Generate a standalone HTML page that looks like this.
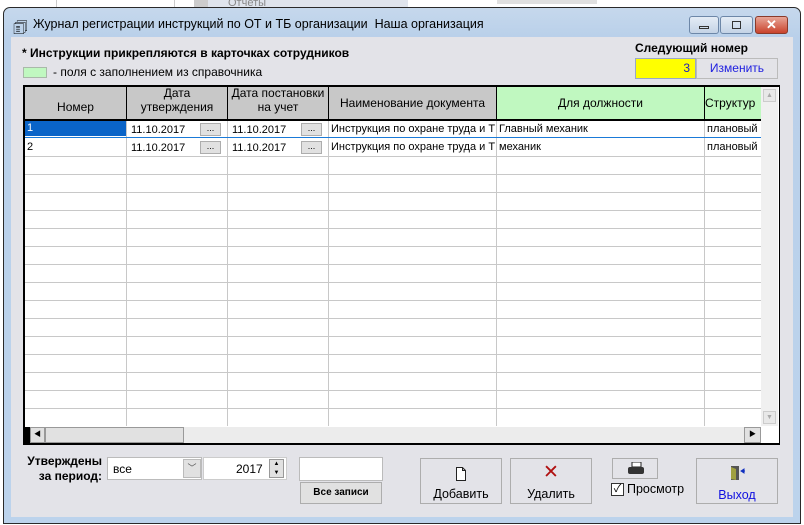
<!DOCTYPE html>
<html><head><meta charset="utf-8"><style>
*{margin:0;padding:0;box-sizing:border-box}
body{width:804px;height:525px;position:relative;overflow:hidden;background:#fff;font-family:"Liberation Sans","Noto Sans CJK SC",sans-serif;font-size:12px;color:#000}
.a{position:absolute}
.btn{position:absolute;background:#e1e1e1;border:1px solid #adadad;text-align:center}
.cell{position:absolute;white-space:nowrap;overflow:hidden;font-size:11px}
.dots{position:absolute;width:21px;height:13px;background:#e1e1e1;border:1px solid #adadad;font-size:9px;line-height:9px;text-align:center}
</style></head><body>
<!-- background app -->
<div class="a" style="left:0;top:0;width:804px;height:8px;background:#fff"></div>
<div class="a" style="left:56px;top:0;width:1px;height:8px;background:#ccc"></div>
<div class="a" style="left:174px;top:0;width:1px;height:8px;background:#ccc"></div>
<div class="a" style="left:194px;top:0;width:14px;height:8px;background:#ccc"></div>
<div class="a" style="left:208px;top:0;width:200px;height:8px;background:#dfe4ec;color:#888;font-size:11px;line-height:6px;padding-left:20px">Отчеты</div>
<div class="a" style="left:497px;top:0;width:100px;height:4px;background:#e0e0e0"></div>
<!-- window frame -->
<div class="a" style="left:3px;top:7px;width:798px;height:517px;border:1px solid #2a2a2a;border-radius:7px 7px 0 0;background:linear-gradient(#c6d8ec,#b9d0ea 30px,#bcd3ec)"></div>
<div class="a" style="left:11px;top:37px;width:782px;height:480px;background:#e3e3e8"></div>
<!-- title -->
<div class="a" style="left:13px;top:17px;font-size:16px">🗊</div>
<div class="a" style="left:33px;top:17px;font-size:12.5px">Журнал регистрации инструкций по ОТ и ТБ организации&nbsp; Наша организация</div>
<div class="a" style="left:689px;top:16px;width:30px;height:18px;border:1px solid #6d87a8;border-radius:3px;background:linear-gradient(#e4ecf6,#c4d3e6)"><div class="a" style="left:9px;top:9px;width:10px;height:3px;border:1px solid #333"></div></div>
<div class="a" style="left:720px;top:16px;width:33px;height:18px;border:1px solid #6d87a8;border-radius:3px;background:linear-gradient(#e4ecf6,#c4d3e6)"><div class="a" style="left:11px;top:4px;width:9px;height:8px;border:1px solid #333"></div></div>
<div class="a" style="left:755px;top:16px;width:33px;height:18px;border:1px solid #8a3a2a;border-radius:3px;background:linear-gradient(#e8a597,#c9432c);color:#fff;font-weight:bold;font-size:13px;text-align:center;line-height:16px">✕</div>
<!-- top texts -->
<div class="a" style="left:22px;top:46px;font-weight:bold;font-size:12px">* Инструкции прикрепляются в карточках сотрудников</div>
<div class="a" style="left:23px;top:67px;width:24px;height:11px;background:#c0f8c0;border:1px solid #a9b9a9"></div>
<div class="a" style="left:53px;top:65px;font-size:12px">- поля с заполнением из справочника</div>
<div class="a" style="left:635px;top:41px;font-weight:bold;font-size:12px">Следующий номер</div>
<div class="a" style="left:635px;top:58px;width:61px;height:21px;background:#ff0;border:1px solid #98a8c8;color:#2020c0;text-align:right;padding-right:5px;line-height:19px">3</div>
<div class="a" style="left:696px;top:58px;width:82px;height:21px;background:#e3e3e8;border:1px solid #bbb;color:#2020e0;text-align:center;line-height:19px">Изменить</div>
<!-- grid -->
<div class="a" style="left:23px;top:85px;width:757px;height:360px;border:2px solid #000;border-right:1px solid #000;background:#fff"></div>
<div class="a" style="left:25px;top:87px;width:472px;height:33px;background:#c8c8c8"></div>
<div class="a" style="left:497px;top:87px;width:264px;height:33px;background:#c0f8c0"></div>
<div class="a" style="left:25px;top:119px;width:736px;height:2px;background:#000"></div>
<div id="cols"></div>
<div class="a" style="left:25px;top:100px;width:101px;text-align:center">Номер</div>
<div class="a" style="left:127px;top:86px;width:100px;text-align:center;line-height:14px">Дата<br>утверждения</div>
<div class="a" style="left:228px;top:86px;width:100px;text-align:center;line-height:14px">Дата постановки<br>на учет</div>
<div class="a" style="left:329px;top:96px;width:167px;text-align:center;white-space:nowrap;overflow:hidden">Наименование документа</div>
<div class="a" style="left:497px;top:96px;width:207px;text-align:center">Для должности</div>
<div class="a" style="left:705px;top:96px;width:56px;white-space:nowrap;overflow:hidden">Структур</div>
<!-- rows -->
<div class="a" style="left:25px;top:121px;width:101px;height:15px;background:#0a64c8"></div>
<div class="a" style="left:25px;top:137px;width:736px;height:1px;background:#1a7ad8"></div>
<div class="cell" style="left:27px;top:122px;color:#fff">1</div>
<div class="cell" style="left:27px;top:141px">2</div>
<div class="cell" style="left:131px;top:124px">11.10.2017</div><div class="dots" style="left:200px;top:123px">...</div>
<div class="cell" style="left:232px;top:124px">11.10.2017</div><div class="dots" style="left:301px;top:123px">...</div>
<div class="cell" style="left:131px;top:142px">11.10.2017</div><div class="dots" style="left:200px;top:141px">...</div>
<div class="cell" style="left:232px;top:142px">11.10.2017</div><div class="dots" style="left:301px;top:141px">...</div>
<div class="cell" style="left:331px;top:123px;width:165px">Инструкция по охране труда и Т</div>
<div class="cell" style="left:331px;top:141px;width:165px">Инструкция по охране труда и Т</div>
<div class="cell" style="left:499px;top:123px">Главный механик</div>
<div class="cell" style="left:499px;top:141px">механик</div>
<div class="cell" style="left:707px;top:123px;width:53px">плановый</div>
<div class="cell" style="left:707px;top:141px;width:53px">плановый</div>
<!-- vscroll -->
<div class="a" style="left:761px;top:87px;width:17px;height:339px;background:#f0f0f0"></div>
<div class="a" style="left:763px;top:89px;width:13px;height:13px;background:#e8e8e8;border:1px solid #ccc;color:#aaa;font-size:7px;text-align:center;line-height:11px">▲</div>
<div class="a" style="left:763px;top:411px;width:13px;height:13px;background:#e8e8e8;border:1px solid #ccc;color:#aaa;font-size:7px;text-align:center;line-height:11px">▼</div>
<!-- hscroll -->
<div class="a" style="left:25px;top:427px;width:736px;height:16px;background:#ececec"></div>
<div class="a" style="left:25px;top:427px;width:5px;height:16px;background:#000"></div>
<div class="a" style="left:30px;top:427px;width:15px;height:16px;background:#e1e1e1;border:1px solid #999;font-size:7px;text-align:center;line-height:14px">◀</div>
<div class="a" style="left:45px;top:427px;width:139px;height:16px;background:#e1e1e1;border:1px solid #999"></div>
<div class="a" style="left:744px;top:427px;width:17px;height:16px;background:#e1e1e1;border:1px solid #999;font-size:7px;text-align:center;line-height:14px">▶</div>
<!-- bottom -->
<div class="a" style="left:26px;top:454px;font-weight:bold;text-align:right;width:76px;line-height:15px">Утверждены<br>за период:</div>
<div class="a" style="left:107px;top:457px;width:95px;height:23px;background:#fff;border:1px solid #bbb;padding:4px 0 0 5px">все</div>
<div class="a" style="left:183px;top:459px;width:18px;height:19px;background:#e1e1e1;border:1px solid #bbb;font-size:9px;text-align:center;line-height:17px;color:#555">﹀</div>
<div class="a" style="left:203px;top:457px;width:84px;height:23px;background:#fff;border:1px solid #ccc;padding:4px 0 0 32px">2017</div>
<div class="a" style="left:269px;top:459px;width:15px;height:19px;background:#e1e1e1;border:1px solid #999;font-size:6px;text-align:center;line-height:9px">▲<br>▼</div>
<div class="a" style="left:299px;top:457px;width:84px;height:24px;background:#fff;border:1px solid #bbb"></div>
<div class="btn" style="left:300px;top:482px;width:82px;height:22px;font-size:10px;font-weight:bold;line-height:20px">Все записи</div>
<div class="btn" style="left:420px;top:458px;width:82px;height:46px;background:#e3e3e8">
 <svg class="a" style="left:34px;top:8px" width="12" height="14"><path d="M1.5 .5h6l3 3v10h-9z M7.5 .5v3h3" fill="#fff" stroke="#222"/></svg>
 <div class="a" style="left:0;top:28px;width:80px;font-size:12.5px">Добавить</div></div>
<div class="btn" style="left:510px;top:458px;width:82px;height:46px;background:#e3e3e8">
 <div class="a" style="left:0;top:4px;width:80px;color:#b01010;font-size:19px;line-height:20px">✕</div>
 <div class="a" style="left:0;top:28px;width:80px;font-size:12.5px">Удалить</div></div>
<div class="btn" style="left:612px;top:458px;width:46px;height:21px;background:#e3e3e8">
 <svg class="a" style="left:14px;top:3px" width="18" height="14"><rect x="5" y="0" width="9" height="5" fill="#fff" stroke="#222"/><rect x="1" y="5" width="16" height="7" rx="2" fill="#333"/></svg></div>
<div class="a" style="left:611px;top:483px;width:13px;height:13px;border:1px solid #333;background:#fff;font-size:11px;line-height:11px;text-align:center">✓</div>
<div class="a" style="left:627px;top:482px;font-size:12.5px">Просмотр</div>
<div class="btn" style="left:696px;top:458px;width:82px;height:46px;background:#e3e3e8">
 <svg class="a" style="left:32px;top:6px" width="18" height="16"><rect x="2" y="1" width="8" height="14" fill="#555"/><path d="M2 2l5 2v11l-5-1z" fill="#a0a040"/><path d="M16 6h-4M12 6l3-2v4z" stroke="#1030c0" fill="#1030c0"/></svg>
 <div class="a" style="left:0;top:29px;width:80px;font-size:12.5px;color:#1010e0">Выход</div></div>
<script>
var c=document.getElementById('cols'),h='';
[126,227,328,496,704].forEach(function(x){h+='<div class="a" style="left:'+x+'px;top:87px;width:1px;height:32px;background:#000"></div><div class="a" style="left:'+x+'px;top:121px;width:1px;height:305px;background:#c8c8c8"></div>'});
for(var y=156;y<426;y+=18)h+='<div class="a" style="left:25px;top:'+y+'px;width:736px;height:1px;background:#c8c8c8"></div>';
c.innerHTML=h;
</script>
</body></html>
